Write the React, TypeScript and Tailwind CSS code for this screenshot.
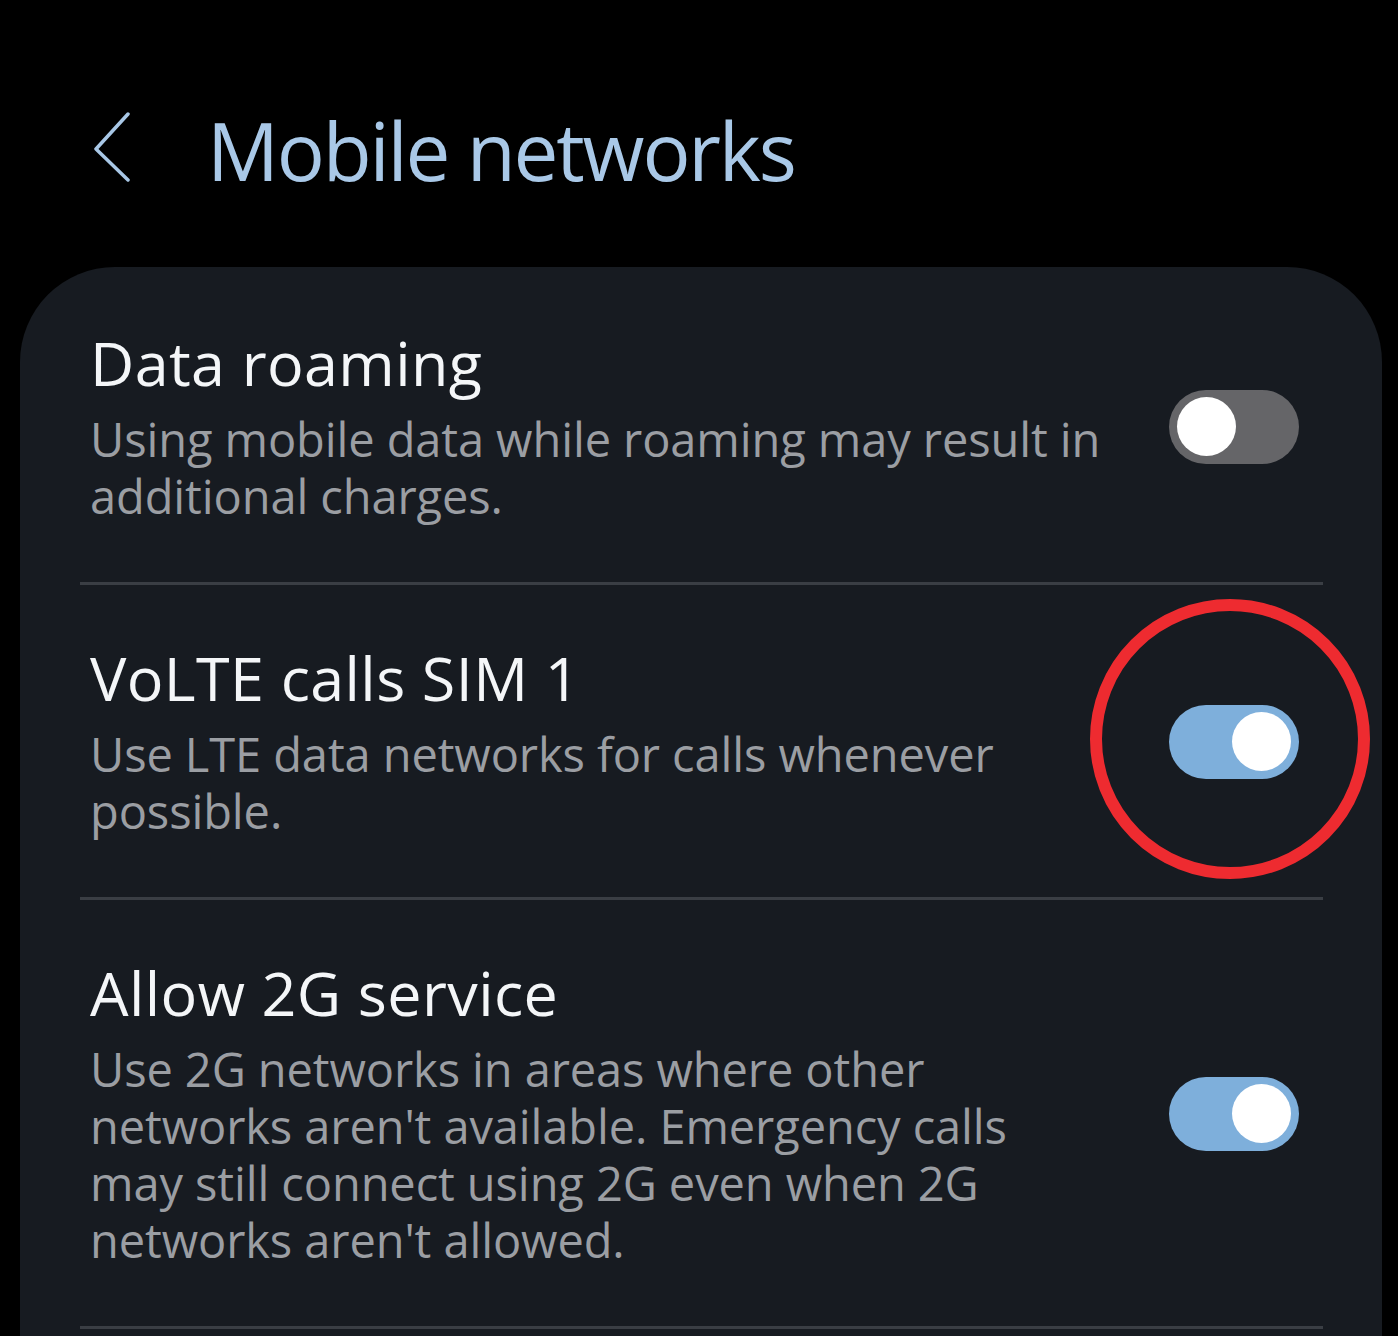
import React from "react";

type Row = {
  title: string;
  lines: string[];
  on: boolean;
  marked?: boolean;
};

const rows: Row[] = [
  {
    title: "Data roaming",
    lines: ["Using mobile data while roaming may result in", "additional charges."],
    on: false,
  },
  {
    title: "VoLTE calls SIM 1",
    lines: ["Use LTE data networks for calls whenever", "possible."],
    on: true,
    marked: true,
  },
  {
    title: "Allow 2G service",
    lines: [
      "Use 2G networks in areas where other",
      "networks aren't available. Emergency calls",
      "may still connect using 2G even when 2G",
      "networks aren't allowed.",
    ],
    on: true,
  },
];

function Toggle({ on }: { on: boolean }) {
  return (
    <div
      className={`flex h-[74px] w-[130px] shrink-0 items-center rounded-full px-[8px] ${
        on ? "justify-end bg-[#7eafdb]" : "justify-start bg-[#656568]"
      }`}
    >
      <span className="h-[59px] w-[59px] rounded-full bg-white" />
    </div>
  );
}

export default function App() {
  return (
    <div
      className="h-[1336px] w-[1398px] overflow-hidden bg-black"
      style={{ fontFamily: '"Open Sans", "Noto Sans", sans-serif' }}
    >
      <header className="flex h-[267px] items-start pt-[100px]">
        <svg
          width="40"
          height="70"
          viewBox="0 0 40 70"
          className="ml-[93px] mt-[12px]"
          fill="none"
          stroke="#a8c7e6"
          strokeWidth="3.5"
          strokeLinecap="round"
          strokeLinejoin="round"
        >
          <path d="M35 2 L3 37 L35 68" />
        </svg>
        <h1 className="ml-[74px] text-[80px] font-medium leading-[100px] tracking-[-2.2px] text-[#a9c8e7]">
          Mobile networks
        </h1>
      </header>

      <main className="ml-[20px] mr-[16px] h-[1069px] rounded-t-[95px] bg-[#171b21]">
        {rows.map((row, i) => (
          <div key={row.title}>
            <div
              className={`relative flex items-center pl-[70px] pr-[83px] pb-[57px] ${
                i === 0 ? "pt-[61px]" : "pt-[58px]"
              }`}
            >
              <div className="flex-1">
                <div className="text-[61px] leading-[70px] tracking-[0.4px] text-[#f4f6f8]">
                  {row.title}
                </div>
                <div className="mt-[13px] text-[47px] leading-[57px] tracking-[-0.1px] text-[#9b9ea3]">
                  {row.lines.map((line) => (
                    <div key={line}>{line}</div>
                  ))}
                </div>
              </div>
              <div className="relative">
                <Toggle on={row.on} />
                {row.marked && (
                  <span className="absolute left-[-79px] top-[-106px] h-[280px] w-[280px] rounded-full border-[12px] border-[#ee2b30]" />
                )}
              </div>
            </div>
            <div className="ml-[60px] mr-[59px] h-[3px] bg-[#3a3e44]" />
          </div>
        ))}
      </main>
    </div>
  );
}
